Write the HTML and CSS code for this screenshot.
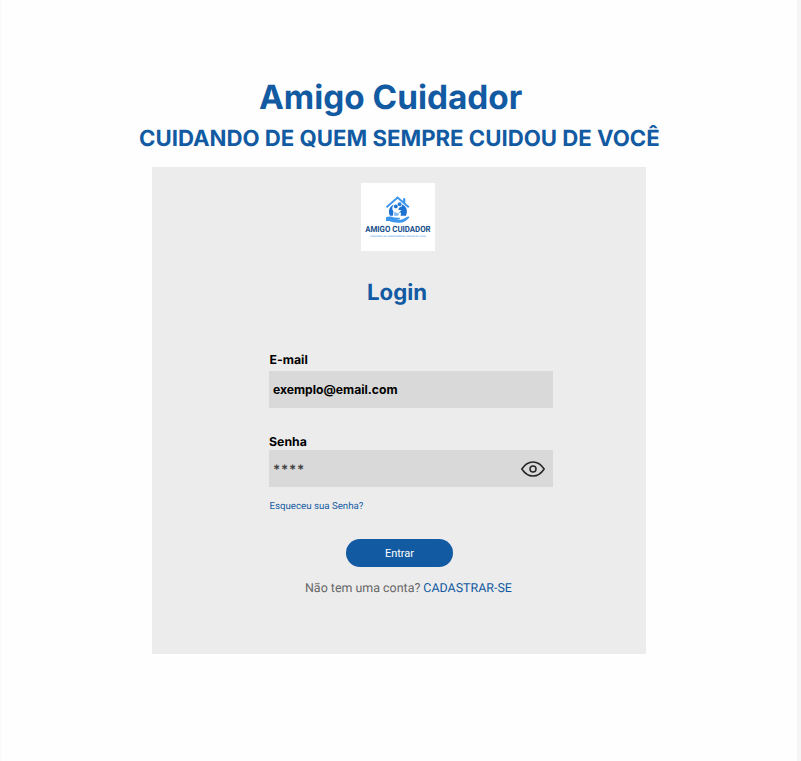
FILE: index.html
```html
<!DOCTYPE html>
<html lang="pt-BR">
<head>
<meta charset="utf-8">
<title>Amigo Cuidador</title>
<link rel="stylesheet" href="styles.css">
</head>
<body>
<main class="page">
  <h1 class="title"><span>Amigo Cuidador</span></h1>
  <p class="tagline"><span>CUIDANDO DE QUEM SEMPRE CUIDOU DE VOCÊ</span></p>
  <section class="card">
    <div class="logo">
      <svg class="logo-mark" viewBox="0 0 26 28" aria-hidden="true">
        <path d="M1.500 12.200 12.600 2.600l11.200 9.600" fill="none" stroke="#3d96ee" stroke-width="2"/>
        <path d="M18 3.200h2.300v5.400L18 6.700z" fill="#3d96ee"/>
        <path d="M9.200 9.600C7 11.500 6.600 14 8.400 16.600l-.5 4.200H5C2.600 16.200 4.500 11.400 9.200 9.600z" fill="#1d72d2"/>
        <circle cx="10.800" cy="11.400" r="1.900" fill="#1d72d2"/>
        <circle cx="14.600" cy="9.200" r="2" fill="#2b82df"/>
        <path d="M17 9.600c4.700 1.700 6.100 6.600 3.900 11.200h-5.300l.5-3.300-2.200.2 2.600-2.700-3.100-.1c.2-2.400 1.700-3.600 3.600-3.500z" fill="#1d72d2"/>
        <path d="M9.400 16.800l3 1.500 1.600-.5-.8 3H9z" fill="#7db8f2"/>
        <path d="M1 22.200c3.200-1.100 5.600-.6 8 .3l5.200.3c1.200.3 1 1.400-.1 1.500l-3.600.2 5 .3c3-.3 5.200-2.500 7.600-3.300 1.200-.2 1.600.7.800 1.400-3 3-5.300 4.800-9.200 4.800-4.500.2-7.600-.4-10.500-1.700L1 26.100z" fill="#3d96ee"/>
      </svg>
      <strong class="logo-name">AMIGO CUIDADOR</strong>
      <small class="logo-line">CUIDANDO DE QUEM SEMPRE CUIDOU DE VOCÊ</small>
    </div>
    <h2 class="heading">Login</h2>
    <form class="form">
      <label class="label" for="email">E-mail</label>
      <input class="field" id="email" type="text" value="exemplo@email.com">
      <label class="label label-senha" for="senha">Senha</label>
      <div class="field password">
        <span class="stars" id="senha">****</span>
        <svg class="eye" viewBox="0 0 26 18" fill="none" stroke="#252525" stroke-width="1.5" aria-hidden="true">
          <path d="M1.800 9C5 4.200 8.700 2 13 2s8 2.200 11.200 7C21 13.800 17.300 16 13 16S5 13.800 1.800 9z" stroke-linejoin="round"/>
          <circle cx="13" cy="9" r="3"/>
        </svg>
      </div>
      <a class="forgot">Esqueceu sua Senha?</a>
    </form>
    <button class="enter" type="button">Entrar</button>
    <p class="signup">Não tem uma conta? <a>CADASTRAR-SE</a></p>
  </section>
</main>
</body>
</html>
```
FILE: styles.css
```css
* { box-sizing: border-box; margin: 0; padding: 0; }
body { background: #fefefe; text-rendering: geometricPrecision; }
.page {
  height: 761px;
  padding-top: 77px;
  border-left: 1px solid #f9f9f9;
  border-right: 4px solid #f5f5f5;
  display: flex;
  flex-direction: column;
  align-items: flex-start;
  font-family: Inter, sans-serif;
  color: #125aa2;
  overflow: hidden;
}
.title { margin-left: 258px; font-size: 33.3px; line-height: 42px; font-weight: 700; white-space: nowrap; }
.tagline { margin: 5px 0 0 138px; font-size: 22.2px; line-height: 30px; font-weight: 700; white-space: nowrap; }
.card {
  width: 494px;
  height: 487px;
  margin: 13px 0 0 151px;
  background: #ececec;
  display: flex;
  flex-direction: column;
  align-items: flex-start;
}
.logo {
  width: 74px;
  height: 68px;
  margin: 16px 0 0 209px;
  padding-top: 12px;
  background: #fff;
  display: flex;
  flex-direction: column;
  align-items: center;
}
.logo-mark { width: 26px; height: 28px; flex: none; }
.logo-name { margin-top: 2px; font: 700 8.6px/10px Roboto, sans-serif; color: #174f8b; white-space: nowrap; transform: scaleX(0.91); }
.logo-line { font: 2.6px/4px Roboto, sans-serif; color: #3d96ee; white-space: nowrap; }
.heading { margin: 28px 0 0 215px; font-size: 22.2px; line-height: 28px; font-weight: 700; }
.form { width: 284px; margin: 45px 0 0 117px; display: flex; flex-direction: column; }
.label { font-size: 12.3px; line-height: 16px; font-weight: 700; color: #000; padding-left: 0.5px; }
.label-senha { margin-top: 26px; padding-left: 0; }
.field {
  width: 284px;
  height: 37px;
  margin-top: 3px;
  padding: 0 4px;
  border: 0;
  outline: 0;
  background: #d9d9d9;
  font: 700 12.15px/16px Inter, sans-serif;
  color: #000;
}
.password { margin-top: 0; display: flex; align-items: center; justify-content: space-between; padding-right: 7px; }
.stars { padding-top: 3px; font: 700 13px/18px Inter, sans-serif; letter-spacing: 0.7px; color: #444; }
.eye { width: 26px; height: 18px; }
.forgot { margin-top: 13px; padding-left: 0.5px; font: 9.7px/14px Roboto, sans-serif; }
.enter {
  width: 107px;
  height: 28px;
  margin: 25px 0 0 194px;
  padding-top: 1px;
  border: 0;
  border-radius: 14px;
  background: #125aa2;
  color: #fff;
  font: 11px/14px Roboto, sans-serif;
}
.signup { margin: 14px 0 0 153px; font: 12.45px/16px Roboto, sans-serif; color: #666; white-space: nowrap; }
.signup a { color: #125aa2; }
```
